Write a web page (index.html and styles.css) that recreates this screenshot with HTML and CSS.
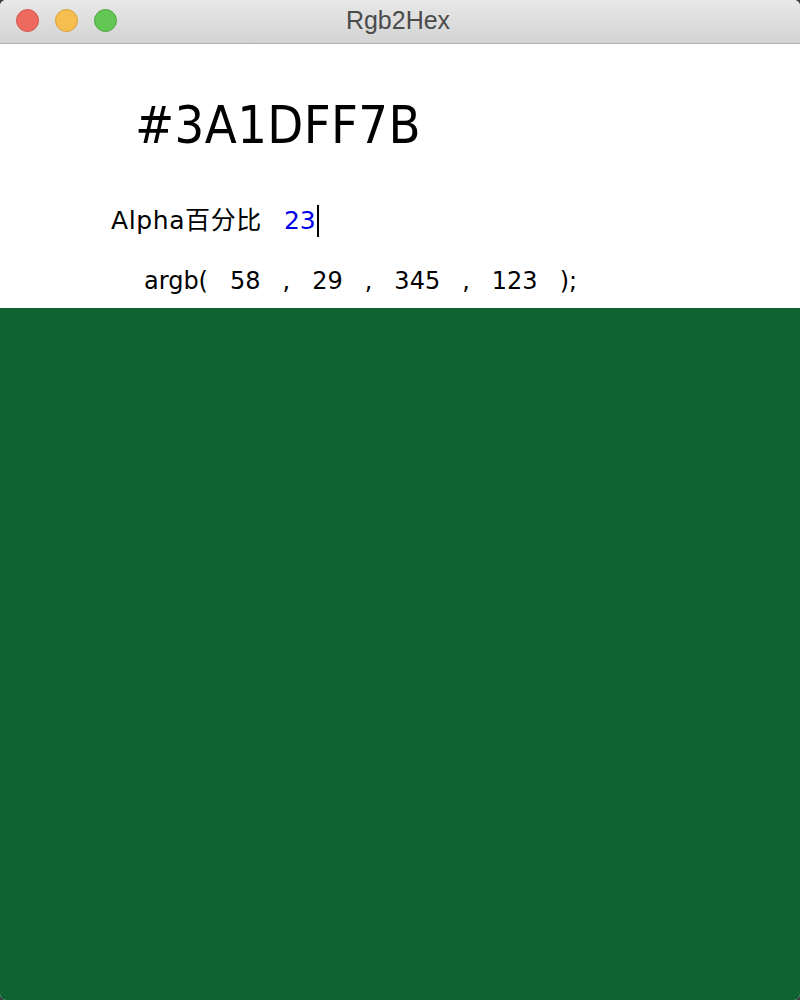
FILE: index.html
```html
<!DOCTYPE html>
<html lang="zh">
<head>
<meta charset="utf-8">
<title>Rgb2Hex</title>
<link rel="stylesheet" href="styles.css">
</head>
<body>
<div class="window">
  <div class="titlebar">
    <div class="lights">
      <span class="light red"></span>
      <span class="light yellow"></span>
      <span class="light green"></span>
    </div>
    <div class="title">Rgb2Hex</div>
  </div>
  <div class="content">
    <div class="hex">#3A1DFF7B</div>
    <div class="alpha-row">
      <span class="label">Alpha百分比</span>
      <span class="field"><span class="value">23</span><span class="caret"></span></span>
    </div>
    <div class="argb-row">
      <span>argb(</span>
      <span>58</span>
      <span>,</span>
      <span>29</span>
      <span>,</span>
      <span>345</span>
      <span>,</span>
      <span>123</span>
      <span>);</span>
    </div>
  </div>
  <div class="swatch"></div>
</div>
</body>
</html>
```
FILE: styles.css
```css
html, body {
  margin: 0;
  padding: 0;
  background: #3a3a3a;
}
body {
  width: 800px;
  height: 1000px;
  overflow: hidden;
}
.window {
  width: 800px;
  height: 1000px;
  border-radius: 6px;
  overflow: hidden;
  background: #ffffff;
  display: flex;
  flex-direction: column;
  font-family: "DejaVu Sans", "Noto Sans CJK SC", sans-serif;
  color: #000;
}
.titlebar {
  height: 43px;
  flex: none;
  background: linear-gradient(#e8e8e8, #d3d3d3);
  border-bottom: 1px solid #b4b4b4;
  position: relative;
  display: flex;
  align-items: center;
  justify-content: center;
}
.lights {
  position: absolute;
  left: 16px;
  top: 9px;
  display: flex;
  gap: 16px;
}
.light {
  width: 23px;
  height: 23px;
  border-radius: 50%;
  box-sizing: border-box;
}
.red { background: #ee6a5f; border: 1px solid #d2544a; }
.yellow { background: #f6be4f; border: 1px solid #d9a03a; }
.green { background: #62c654; border: 1px solid #4ea83f; }
.title {
  font-family: "Liberation Sans", "Noto Sans", sans-serif;
  font-size: 25px;
  color: #4b4b4b;
  margin-left: -4px;
  margin-top: -2px;
}
.content {
  height: 264px;
  flex: none;
  position: relative;
}
.hex {
  font-family: "DejaVu Sans Condensed", "DejaVu Sans", sans-serif;
  font-stretch: condensed;
  font-size: 52px;
  line-height: 60px;
  padding-left: 135px;
  padding-top: 51px;
  letter-spacing: 0.4px;
}
.alpha-row {
  display: flex;
  align-items: baseline;
  padding-left: 111px;
  margin-top: 49px;
  font-size: 25px;
  line-height: 34px;
}
.label {
  letter-spacing: 0.6px;
}
.field {
  margin-left: 22px;
  position: relative;
  display: inline-flex;
  align-items: center;
}
.value {
  color: #0000ee;
}
.caret {
  display: inline-block;
  width: 2px;
  height: 32px;
  background: #000;
  margin-left: 1px;
}
.argb-row {
  display: flex;
  align-items: baseline;
  gap: 22px;
  padding-left: 144px;
  margin-top: 28px;
  font-size: 24px;
  line-height: 30px;
}
.swatch {
  flex: 1;
  background: #0d6431;
}
```
